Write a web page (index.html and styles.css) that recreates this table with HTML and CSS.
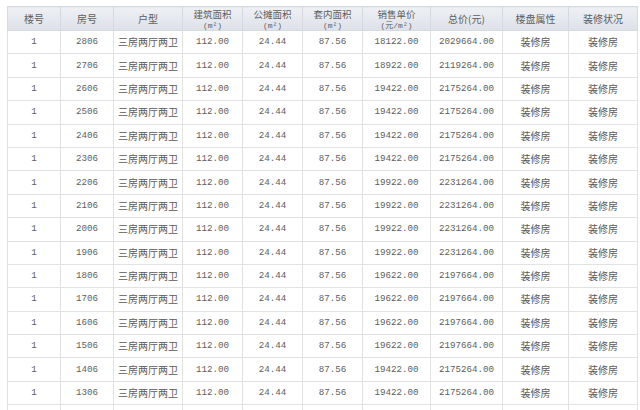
FILE: index.html
```html
<!DOCTYPE html>
<html lang="zh">
<head>
<meta charset="utf-8">
<link rel="stylesheet" href="styles.css">
</head>
<body>
<div class="wrap">
<table class="grid">
<colgroup>
<col style="width:53px"><col style="width:53px"><col style="width:69px"><col style="width:60px"><col style="width:60px"><col style="width:60px"><col style="width:68px"><col style="width:72px"><col style="width:66px"><col style="width:69px">
</colgroup>
<thead>
<tr>
<th>楼号</th><th>房号</th><th>户型</th><th><span class="l1">建筑面积</span><span class="unit">(m²)</span></th><th><span class="l1">公摊面积</span><span class="unit">(m²)</span></th><th><span class="l1">套内面积</span><span class="unit">(m²)</span></th><th><span class="l1">销售单价</span><span class="unit">(元/m²)</span></th><th>总价(元)</th><th>楼盘属性</th><th>装修状况</th>
</tr>
</thead>
<tbody>
<tr><td class="n">1</td><td class="n">2806</td><td>三房两厅两卫</td><td class="n">112.00</td><td class="n">24.44</td><td class="n">87.56</td><td class="n">18122.00</td><td class="n">2029664.00</td><td>装修房</td><td>装修房</td></tr>
<tr><td class="n">1</td><td class="n">2706</td><td>三房两厅两卫</td><td class="n">112.00</td><td class="n">24.44</td><td class="n">87.56</td><td class="n">18922.00</td><td class="n">2119264.00</td><td>装修房</td><td>装修房</td></tr>
<tr><td class="n">1</td><td class="n">2606</td><td>三房两厅两卫</td><td class="n">112.00</td><td class="n">24.44</td><td class="n">87.56</td><td class="n">19422.00</td><td class="n">2175264.00</td><td>装修房</td><td>装修房</td></tr>
<tr><td class="n">1</td><td class="n">2506</td><td>三房两厅两卫</td><td class="n">112.00</td><td class="n">24.44</td><td class="n">87.56</td><td class="n">19422.00</td><td class="n">2175264.00</td><td>装修房</td><td>装修房</td></tr>
<tr><td class="n">1</td><td class="n">2406</td><td>三房两厅两卫</td><td class="n">112.00</td><td class="n">24.44</td><td class="n">87.56</td><td class="n">19422.00</td><td class="n">2175264.00</td><td>装修房</td><td>装修房</td></tr>
<tr><td class="n">1</td><td class="n">2306</td><td>三房两厅两卫</td><td class="n">112.00</td><td class="n">24.44</td><td class="n">87.56</td><td class="n">19422.00</td><td class="n">2175264.00</td><td>装修房</td><td>装修房</td></tr>
<tr><td class="n">1</td><td class="n">2206</td><td>三房两厅两卫</td><td class="n">112.00</td><td class="n">24.44</td><td class="n">87.56</td><td class="n">19922.00</td><td class="n">2231264.00</td><td>装修房</td><td>装修房</td></tr>
<tr><td class="n">1</td><td class="n">2106</td><td>三房两厅两卫</td><td class="n">112.00</td><td class="n">24.44</td><td class="n">87.56</td><td class="n">19922.00</td><td class="n">2231264.00</td><td>装修房</td><td>装修房</td></tr>
<tr><td class="n">1</td><td class="n">2006</td><td>三房两厅两卫</td><td class="n">112.00</td><td class="n">24.44</td><td class="n">87.56</td><td class="n">19922.00</td><td class="n">2231264.00</td><td>装修房</td><td>装修房</td></tr>
<tr><td class="n">1</td><td class="n">1906</td><td>三房两厅两卫</td><td class="n">112.00</td><td class="n">24.44</td><td class="n">87.56</td><td class="n">19922.00</td><td class="n">2231264.00</td><td>装修房</td><td>装修房</td></tr>
<tr><td class="n">1</td><td class="n">1806</td><td>三房两厅两卫</td><td class="n">112.00</td><td class="n">24.44</td><td class="n">87.56</td><td class="n">19622.00</td><td class="n">2197664.00</td><td>装修房</td><td>装修房</td></tr>
<tr><td class="n">1</td><td class="n">1706</td><td>三房两厅两卫</td><td class="n">112.00</td><td class="n">24.44</td><td class="n">87.56</td><td class="n">19622.00</td><td class="n">2197664.00</td><td>装修房</td><td>装修房</td></tr>
<tr><td class="n">1</td><td class="n">1606</td><td>三房两厅两卫</td><td class="n">112.00</td><td class="n">24.44</td><td class="n">87.56</td><td class="n">19622.00</td><td class="n">2197664.00</td><td>装修房</td><td>装修房</td></tr>
<tr><td class="n">1</td><td class="n">1506</td><td>三房两厅两卫</td><td class="n">112.00</td><td class="n">24.44</td><td class="n">87.56</td><td class="n">19622.00</td><td class="n">2197664.00</td><td>装修房</td><td>装修房</td></tr>
<tr><td class="n">1</td><td class="n">1406</td><td>三房两厅两卫</td><td class="n">112.00</td><td class="n">24.44</td><td class="n">87.56</td><td class="n">19422.00</td><td class="n">2175264.00</td><td>装修房</td><td>装修房</td></tr>
<tr><td class="n">1</td><td class="n">1306</td><td>三房两厅两卫</td><td class="n">112.00</td><td class="n">24.44</td><td class="n">87.56</td><td class="n">19422.00</td><td class="n">2175264.00</td><td>装修房</td><td>装修房</td></tr>
<tr><td class="n"></td><td class="n"></td><td></td><td class="n"></td><td class="n"></td><td class="n"></td><td class="n"></td><td class="n"></td><td></td><td></td></tr>
</tbody>
</table>
</div>
</body>
</html>
```
FILE: styles.css
```css
html, body {
  margin: 0;
  padding: 0;
  background: #ffffff;
}
.wrap {
  padding: 6px 0 0 7px;
  overflow: hidden;
  height: 404px;
}
.grid {
  border-collapse: collapse;
  table-layout: fixed;
  width: 630px;
  font-family: "Noto Sans CJK SC", sans-serif;
  font-size: 10px;
  color: #5a5a5a;
}
.grid th {
  height: 23px;
  padding: 0;
  font-weight: normal;
  line-height: 12px;
  color: #5e5e5e;
  background: linear-gradient(#eef0f4, #dde1e8);
  border: 1px solid #d6dae0;
  text-align: center;
  vertical-align: middle;
}
.grid th .l1,
.grid th .unit {
  display: block;
}
.grid th .l1 {
  font-size: 9.5px;
  line-height: 14px;
}
.grid th .unit {
  font-size: 8px;
  line-height: 9px;
  font-family: "Liberation Mono", "Noto Sans CJK SC", monospace;
}
.grid td {
  height: 22.3px;
  padding: 0;
  text-align: center;
  vertical-align: middle;
  border: 1px solid #e2e2e2;
  line-height: 12px;
  white-space: nowrap;
  box-sizing: border-box;
}
.grid tbody tr {
  height: 23.4px;
}
.grid td.n {
  font-family: "Liberation Mono", monospace;
  font-size: 9.2px;
  color: #606060;
}
```
